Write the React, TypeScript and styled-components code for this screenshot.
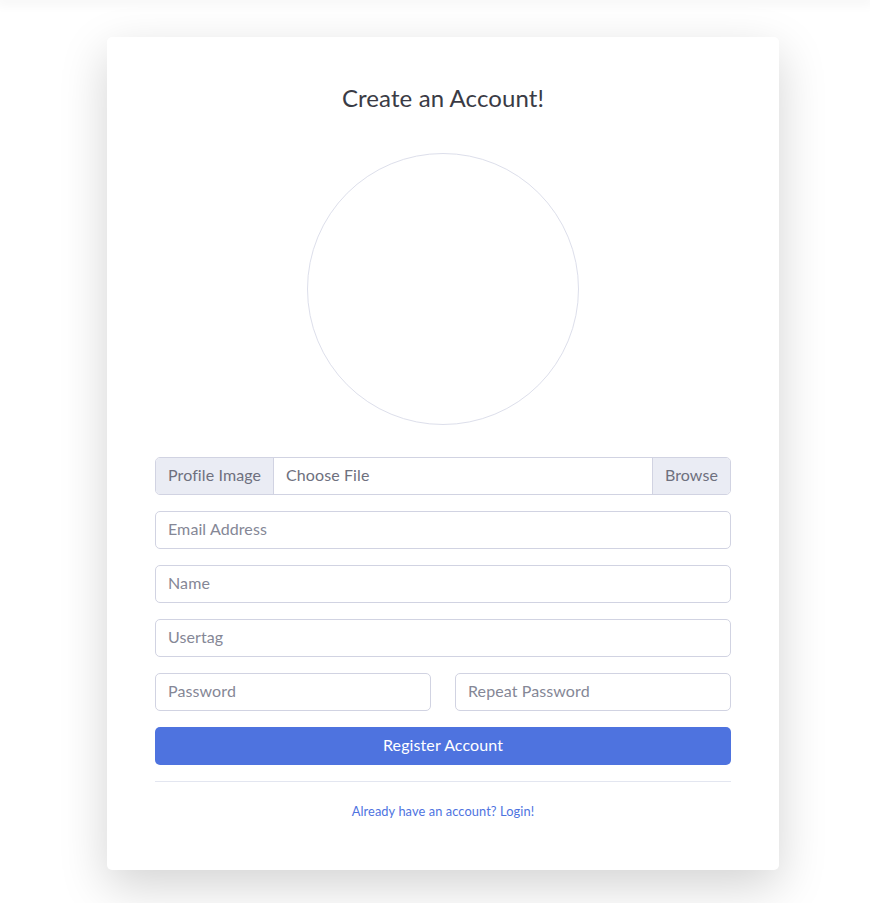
import React from "react";
import styled, { createGlobalStyle } from "styled-components";

const GlobalStyle = createGlobalStyle`
  html, body { margin: 0; padding: 0; background: #ffffff; }
  body {
    font-family: Lato, "Liberation Sans", sans-serif;
    letter-spacing: 0.1px;
    color: #858796;
  }
  * { box-sizing: border-box; }
`;

const TopShade = styled.div`
  height: 0;
  box-shadow: 0 0 12px 4px rgba(0, 0, 0, 0.05);
`;

const Page = styled.div`
  display: flex;
  justify-content: center;
  padding: 37px 0 34px 16px;
`;

const Card = styled.div`
  width: 672px;
  background: #fff;
  border-radius: 5px;
  box-shadow: 0 1rem 3rem rgba(0, 0, 0, 0.175);
  padding: 48px 48px 49px;
  display: flex;
  flex-direction: column;
`;

const Title = styled.h1`
  margin: 0;
  text-align: center;
  font-size: 24px;
  font-weight: 400;
  line-height: 25px;
  color: #3a3b45;
`;

const Avatar = styled.div`
  width: 272px;
  height: 272px;
  border-radius: 50%;
  border: 1px solid #dddfeb;
  align-self: center;
  margin: 43px 0 32px;
`;

const Form = styled.form`
  display: flex;
  flex-direction: column;
  gap: 16px;
`;

const InputGroup = styled.div`
  display: flex;
  height: 38px;
  border: 1px solid #d1d3e2;
  border-radius: 5px;
  overflow: hidden;
  font-size: 16px;
  color: #6e707e;
`;

const Addon = styled.span<{ $side: "left" | "right" }>`
  display: flex;
  align-items: center;
  padding: 0 12px 3px;
  background: #eaecf4;
  ${(p) => (p.$side === "left" ? "border-right: 1px solid #d1d3e2;" : "border-left: 1px solid #d1d3e2;")}
`;

const FileLabel = styled.span`
  flex: 1;
  display: flex;
  align-items: center;
  padding: 0 12px 3px;
`;

const Input = styled.input`
  width: 100%;
  height: 38px;
  border: 1px solid #d1d3e2;
  border-radius: 5px;
  padding: 0 12px 3px;
  font-family: inherit;
  letter-spacing: inherit;
  font-size: 16px;
  color: #6e707e;
  outline: none;
  &::placeholder { color: #858796; opacity: 1; }
`;

const Row = styled.div`
  display: grid;
  grid-template-columns: 1fr 1fr;
  gap: 24px;
`;

const Button = styled.button`
  height: 38px;
  border: none;
  border-radius: 5px;
  background: #4e73df;
  color: #fff;
  font-family: inherit;
  letter-spacing: inherit;
  font-size: 16px;
  padding: 0 12px 3px;
`;

const Divider = styled.hr`
  border: none;
  border-top: 1px solid #e3e6f0;
  margin: 16px 0 20px;
`;

const Footer = styled.div`
  text-align: center;
  font-size: 12.8px;
  line-height: 19px;
`;

const Link = styled.a`
  color: #4e73df;
  text-decoration: none;
`;

export default function App() {
  return (
    <>
      <GlobalStyle />
      <TopShade />
      <Page>
        <Card>
          <Title>Create an Account!</Title>
          <Avatar />
          <Form onSubmit={(e) => e.preventDefault()}>
            <InputGroup>
              <Addon $side="left">Profile Image</Addon>
              <FileLabel>Choose File</FileLabel>
              <Addon $side="right">Browse</Addon>
            </InputGroup>
            <Input placeholder="Email Address" />
            <Input placeholder="Name" />
            <Input placeholder="Usertag" />
            <Row>
              <Input type="password" placeholder="Password" />
              <Input type="password" placeholder="Repeat Password" />
            </Row>
            <Button type="submit">Register Account</Button>
          </Form>
          <Divider />
          <Footer>
            <Link href="#">Already have an account? Login!</Link>
          </Footer>
        </Card>
      </Page>
    </>
  );
}
